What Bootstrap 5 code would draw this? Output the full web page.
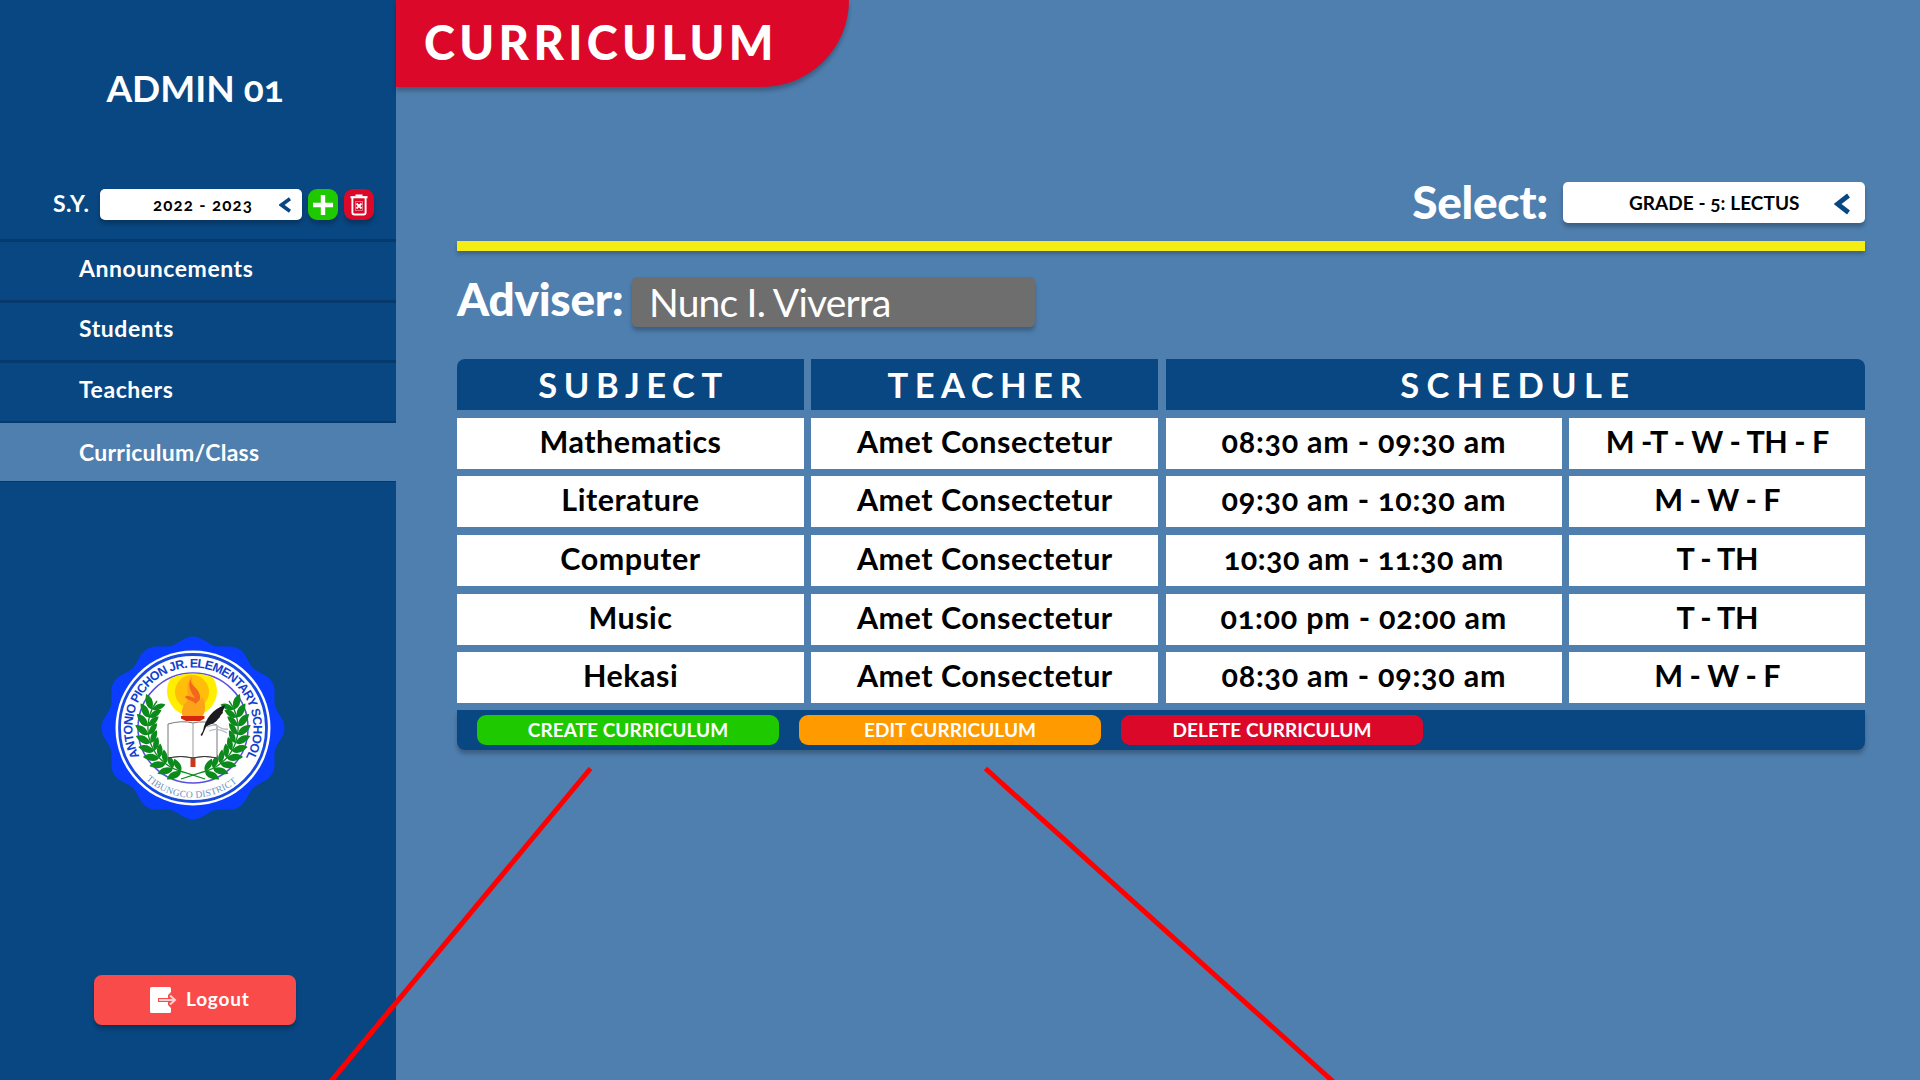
<!DOCTYPE html>
<html lang="en">
<head>
<meta charset="utf-8">
<meta name="viewport" content="width=device-width, initial-scale=1">
<title>Curriculum</title>
<link href="https://cdn.jsdelivr.net/npm/bootstrap@5.3.0/dist/css/bootstrap.min.css" rel="stylesheet">
<style>
  :root { --navy: #094782; --steel: #4f7faf; --crimson: #dc0829; --lime: #1fc900; --amber: #ff9a00; }
  body { font-family: Lato, "Open Sans", sans-serif; font-weight: 700; font-variant-numeric: oldstyle-nums; background: var(--steel); width: 1920px; height: 1080px; white-space: nowrap; }
  .bg-navy { background: var(--navy); }
  .bg-crimson { background: var(--crimson); }
  .bg-lime { background: var(--lime); }
  .bg-amber { background: var(--amber); }
  .drop { box-shadow: 0 4px 4px rgba(0,0,0,.25); }

  .sidebar { width: 396px; height: 1080px; }
  .admin-name { font-size: 37px; line-height: 44px; padding-top: 66px; height: 189px; padding-right: 6px; }
  .year-row { height: 50px; padding-left: 53px; }
  .year-label { font-size: 23px; line-height: 28px; width: 47px; letter-spacing: .4px; }
  .year-box { width: 202px; height: 31px; border-radius: 5px; font-size: 17px; letter-spacing: 1.1px; padding: 0 11px 0 53px; margin-right: 6px; }
  .mini-btn { width: 30px; height: 31px; border-radius: 9px; margin-right: 6px; }
  .side-link { height: 60.5px; padding: 0 0 6px 79px; font-size: 23px; letter-spacing: .55px; border-top: 3px solid #073a6c; color: #fff; text-decoration: none; }
  .side-link.current { height: 61px; background: var(--steel); border-top-width: 2px; letter-spacing: .25px; padding-top: 4px; padding-bottom: 2px; border-bottom: 1px solid #073a6c; }
  .seal { width: 190px; height: 190px; margin: 151px 0 0 98px; }
  .logout { width: 202px; height: 50px; margin: 152px 0 0 94px; border-radius: 8px; background: #fa4b4b; font-size: 19px; letter-spacing: .8px; padding-left: 56px; gap: 9px; }

  .title-tab { width: 453px; height: 87px; border-radius: 0 0 87px 0; font-size: 47px; font-weight: 900; letter-spacing: 4.3px; line-height: 56px; padding: 14px 0 0 28px; }
  .content { padding: 95px 55px 0 61px; }
  .select-row { height: 59px; }
  .select-label, .adviser-label { font-size: 46px; line-height: 56px; letter-spacing: .1px; }
  .select-label { margin: -8px 15px 0 0; font-weight: 900; letter-spacing: -.3px; }
  .adviser-label { font-weight: 900; letter-spacing: -.3px; }
  .grade-box { width: 302px; height: 41px; border-radius: 5px; font-size: 19px; letter-spacing: .05px; padding: 2px 15px 0 66px; }
  .rule { height: 10px; background: #f4ec15; box-shadow: 0 3px 4px rgba(0,0,0,.25); }
  .adviser-row { height: 50px; margin-top: 26px; }
  .adviser-label { width: 175px; margin-top: -6px; }
  .adviser-box { width: 403px; height: 50px; background: #6e6e6e; border-radius: 5px; font-size: 39px; font-weight: 400; letter-spacing: -.8px; padding-left: 17px; }

  .schedule { display: grid; grid-template-columns: 347px 347px 396.5px 1fr; grid-auto-rows: 51.2px; gap: 7.45px 7.3px; margin-top: 32px; }
  .schedule > div { display: flex; align-items: center; justify-content: center; background: #fff; color: #000; font-size: 30.5px; letter-spacing: .5px; padding-bottom: 3px; }
  .schedule > .head { background: var(--navy); color: #fff; font-size: 34.5px; letter-spacing: 6.5px; padding-left: 6px; padding-bottom: 0; }
  .schedule > .time { letter-spacing: .75px; }
  .schedule > .day { letter-spacing: -.5px; }
  .schedule > .first { border-radius: 8px 0 0 0; }
  .schedule > .last { grid-column: span 2; border-radius: 0 8px 0 0; letter-spacing: 7.3px; }
  .actions { height: 40px; margin-top: 7px; border-radius: 0 0 8px 8px; padding-left: 20px; gap: 20px; }
  .action-btn { width: 302px; height: 30px; border-radius: 9px; border: 0; color: #fff; font-size: 19px; font-weight: 700; letter-spacing: .05px; padding: 0; line-height: 28px; }
  .pointer-lines { pointer-events: none; }
</style>
</head>
<body class="d-flex overflow-hidden position-relative">

<aside class="sidebar bg-navy text-white flex-shrink-0">
  <div class="admin-name text-center">ADMIN 01</div>
  <div class="year-row d-flex align-items-start">
    <span class="year-label">S.Y.</span>
    <div class="year-box drop bg-white text-black d-flex align-items-center justify-content-between">
      <span>2022 - 2023</span>
      <svg width="12" height="16" viewBox="0 0 12 16"><path d="M11 1.800 2.500 8 11 14.200" fill="none" stroke="#094782" stroke-width="3.600"/></svg>
    </div>
    <div class="mini-btn bg-lime drop d-flex align-items-center justify-content-center">
      <svg width="20" height="20"><path d="M10 0v20M0 10h20" stroke="#fff" stroke-width="4.400"/></svg>
    </div>
    <div class="mini-btn bg-crimson drop d-flex align-items-center justify-content-center">
      <svg width="18" height="22" viewBox="0 0 18 22" fill="none" stroke="#fff"><path d="M.5 3.200h17" stroke-width="2.200"/><path d="M5.500 1.500h7" stroke-width="2"/><path d="M2.400 4v14.500q0 2 2 2h9.200q2 0 2-2V4" stroke-width="1.900"/><path d="M5.500 7.500h7v9h-7z" stroke-width=".6" stroke-opacity=".7"/><path d="m6.500 9.500 5 5m0-5-5 5" stroke-width="1.900"/></svg>
    </div>
  </div>
  <nav>
    <a href="#" class="side-link d-flex align-items-center">Announcements</a>
    <a href="#" class="side-link d-flex align-items-center">Students</a>
    <a href="#" class="side-link d-flex align-items-center">Teachers</a>
    <a href="#" class="side-link current d-flex align-items-center">Curriculum/Class</a>
  </nav>

  <svg class="seal d-block" viewBox="-95 -95 190 190">
    <defs>
      <path id="wedge" d="M0 0-22-82.100C-14.300-84.200-9-91.500 0-91.500S14.300-84.200 22-82.100Z"/>
      <path id="leaves" d="M-1-45C-3-50 2-55 10-57 10-50 6-46-1-45ZM-1-45C-2-40 3-36 9-35 9-41 5-44-1-45Z"/>
      <g id="branch">
        <use href="#leaves" transform="rotate(-64)"/><use href="#leaves" transform="rotate(-75)"/><use href="#leaves" transform="rotate(-86)"/><use href="#leaves" transform="rotate(-97)"/><use href="#leaves" transform="rotate(-108)"/><use href="#leaves" transform="rotate(-119)"/><use href="#leaves" transform="rotate(-130)"/><use href="#leaves" transform="rotate(-141)"/><use href="#leaves" transform="rotate(-152)"/><use href="#leaves" transform="rotate(-163)"/>
        <path d="M-36-27A45 45 0 0 0-10 44L12 51" fill="none" stroke="#0c8a1c" stroke-width="1.300"/>
      </g>
      <path id="arc-top" d="M-53.500 28.400A60.500 60.500 0 1 1 51.500 31.700"/>
      <path id="arc-bottom" d="M-47 51.500A69.700 69.700 0 0 0 47 51.500"/>
      <clipPath id="inner-disc"><circle r="54.500"/></clipPath>
    </defs>
    <g fill="#0a3dff">
      <circle r="84"/>
      <use href="#wedge"/><use href="#wedge" transform="rotate(30)"/><use href="#wedge" transform="rotate(60)"/><use href="#wedge" transform="rotate(90)"/><use href="#wedge" transform="rotate(120)"/><use href="#wedge" transform="rotate(150)"/><use href="#wedge" transform="rotate(180)"/><use href="#wedge" transform="rotate(210)"/><use href="#wedge" transform="rotate(240)"/><use href="#wedge" transform="rotate(270)"/><use href="#wedge" transform="rotate(300)"/><use href="#wedge" transform="rotate(330)"/>
    </g>
    <circle r="77.500" fill="#fff"/>
    <circle r="73.500" fill="none" stroke="#1748e0" stroke-width="2.800"/>
    <circle r="55" fill="#fff" stroke="#5a50e0" stroke-width="1.500"/>
    <text font-family="Liberation Sans, Arial, sans-serif" font-size="12.500" font-weight="700" fill="#123fd0"><textPath href="#arc-top" textLength="250">ANTONIO PICHON JR. ELEMENTARY SCHOOL</textPath></text>
    <text font-family="Liberation Serif, Times New Roman, serif" font-size="9.500" font-weight="400" fill="#6f8fc4"><textPath href="#arc-bottom" textLength="99">TIBUNGCO DISTRICT</textPath></text>
    <g clip-path="url(#inner-disc)">
      <circle cx="-1" cy="-37" r="25" fill="#ffee00"/>
      <circle cx="-1" cy="-36" r="17" fill="#ffbe0a"/>
    </g>
    <path d="M-10-11C-14-20-6-26-4-30-7-37-6-46-1-52-3-43 7-38 7-28 9-29 9-32 9-32 13-25 13-16 9-11Z" fill="#fda31a"/>
    <path d="M-2-50C-6-42-2-36 2-30-2-31-6-34-8-31-5-27 0-28 3-24 4-27 8-27 7-32 6-41-4-42-2-50Z" fill="#f4661b"/>
    <g fill="#0c8a1c">
      <use href="#branch"/>
      <use href="#branch" transform="scale(-1 1)"/>
    </g>
    <path d="M-2.500 30h5v9h-5z" fill="#c8381c"/>
    <path d="M-25-4Q-11-8 0-5 11-8 24-3V30Q11 27 0 30-12 27-25 30Z" fill="#fff" stroke="#777" stroke-width="1"/>
    <path d="M0-5V30" stroke="#999" stroke-width="1"/>
    <path d="M-25 30Q-12 27 0 30 11 27 24 30" fill="none" stroke="#333" stroke-width="1.200"/>
    <path d="M-12-12H11.500V-9.500L7-7H-7L-12-9.500Z" fill="#d4260e"/>
    <path d="M10 3C12-9 20-19 32-23 31-18 29-17 30-15 26-12 28-11 25-9 22-4 16-4 13-1L9 8 7.500 7Z" fill="#1b1b1f"/>
    <path d="M14-1Q22-5 26-1 30 2 35 1M16 3Q24-1 34 5" fill="none" stroke="#b9bcc4" stroke-width="1.300"/>
  </svg>

  <div class="logout drop d-flex align-items-center">
    <svg width="27" height="26" viewBox="0 0 27 26"><path d="M1.500 0h18q1.500 0 1.500 1.500V5l-3 3v3H8v4h10v3l3 3v3.500q0 1.500-1.500 1.500h-18Q0 26 0 24.500v-23Q0 0 1.500 0Z" fill="#fff"/><path d="M9 13h15M20 8.500 25 13l-5 4.500" fill="none" stroke="#ffd0d0" stroke-width="2"/></svg>
    <span>Logout</span>
  </div>
</aside>

<main class="flex-grow-1">
  <h1 class="title-tab bg-crimson drop text-white m-0">CURRICULUM</h1>
  <div class="content">
    <div class="select-row d-flex justify-content-end align-items-start text-white">
      <span class="select-label">Select:</span>
      <div class="grade-box drop bg-white text-black d-flex align-items-center justify-content-between">
        <span>GRADE - 5: LECTUS</span>
        <svg width="16" height="22" viewBox="0 0 16 22"><path d="M14.500 2.500 3.500 11l11 8.500" fill="none" stroke="#094782" stroke-width="4.800"/></svg>
      </div>
    </div>
    <div class="rule"></div>
    <div class="adviser-row d-flex text-white">
      <span class="adviser-label">Adviser:</span>
      <div class="adviser-box drop d-flex align-items-center">Nunc I. Viverra</div>
    </div>

    <div class="schedule">
      <div class="head first">SUBJECT</div><div class="head">TEACHER</div><div class="head last">SCHEDULE</div>
      <div>Mathematics</div><div>Amet Consectetur</div><div class="time">08:30 am - 09:30 am</div><div class="day">M -T - W - TH - F</div>
      <div>Literature</div><div>Amet Consectetur</div><div class="time">09:30 am - 10:30 am</div><div class="day">M - W - F</div>
      <div>Computer</div><div>Amet Consectetur</div><div>10:30 am - 11:30 am</div><div class="day">T - TH</div>
      <div>Music</div><div>Amet Consectetur</div><div class="time">01:00 pm - 02:00 am</div><div class="day">T - TH</div>
      <div>Hekasi</div><div>Amet Consectetur</div><div class="time">08:30 am - 09:30 am</div><div class="day">M - W - F</div>
    </div>
    <div class="actions bg-navy drop d-flex align-items-center">
      <button class="action-btn bg-lime">CREATE CURRICULUM</button>
      <button class="action-btn bg-amber">EDIT CURRICULUM</button>
      <button class="action-btn bg-crimson">DELETE CURRICULUM</button>
    </div>
  </div>
</main>

<svg class="pointer-lines position-absolute top-0 start-0" width="1920" height="1080" stroke="#f00" stroke-width="5"><path d="M590.500 768.500 327 1086M985.500 768.500 1338 1086"/></svg>

<script src="https://cdn.jsdelivr.net/npm/bootstrap@5.3.0/dist/js/bootstrap.bundle.min.js"></script>
</body>
</html>
